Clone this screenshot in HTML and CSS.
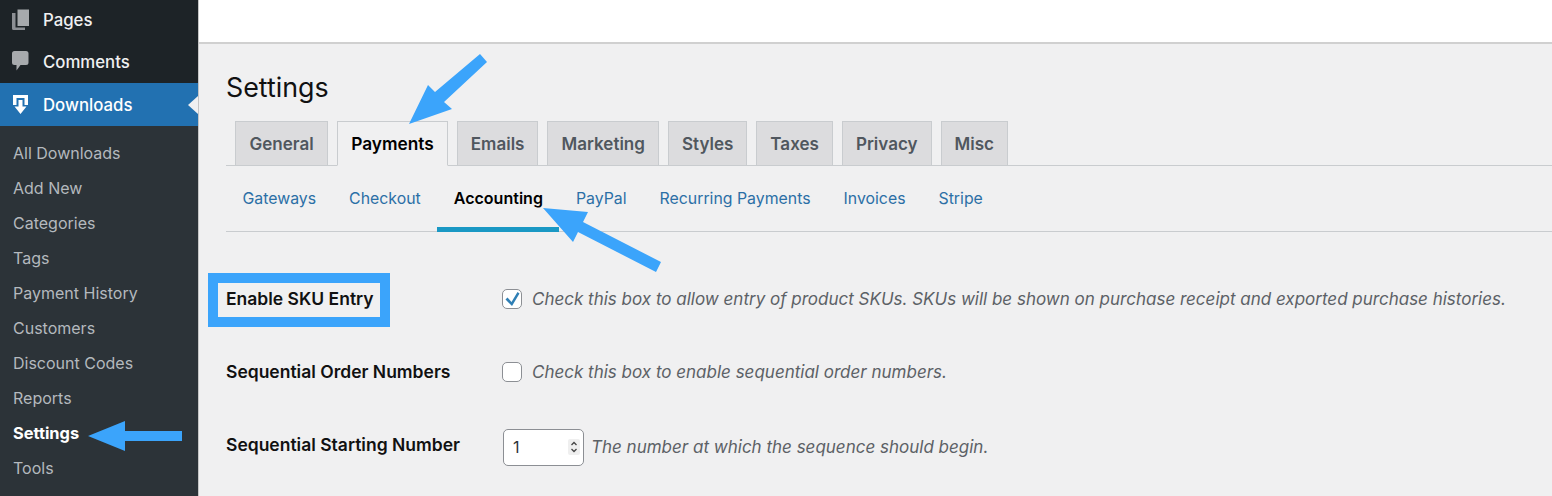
FILE: index.html
```html
<!DOCTYPE html>
<html lang="en">
<head>
<meta charset="utf-8">
<title>Settings</title>
<link rel="stylesheet" href="styles.css">
</head>
<body>
<div class="app">
  <aside class="sidebar">
    <a class="menu-item">
      <svg class="menu-icon" viewBox="0 0 18 22"><path fill="#a7aaad" d="M5.500 0.500H17v16.500H5.500z"/><path fill="#8c8f94" d="M0 4h3.500v14.500H13V21H1.500Q0 21 0 19.500z"/></svg>
      <span>Pages</span>
    </a>
    <a class="menu-item">
      <svg class="menu-icon" viewBox="0 0 18 22"><path fill="#a7aaad" d="M2.500 0h11.500Q16.500 0 16.500 2.500v9Q16.500 14 14 14H8.500L4.500 19.500V14h-2Q0 14 0 11.500v-9Q0 0 2.500 0z"/></svg>
      <span>Comments</span>
    </a>
    <a class="menu-item current">
      <svg class="menu-icon" viewBox="0 0 18 22"><path fill="#fff" d="M1 1h15v10h-3.500V4h-8v7H1z"/><path fill="#fff" d="M6.500 6h4v6.500h4L8.500 20l-6-7.500h4z"/></svg>
      <span>Downloads</span>
    </a>
    <nav class="submenu">
      <a>All Downloads</a>
      <a>Add New</a>
      <a>Categories</a>
      <a>Tags</a>
      <a>Payment History</a>
      <a>Customers</a>
      <a>Discount Codes</a>
      <a>Reports</a>
      <a class="active">Settings</a>
      <a>Tools</a>
    </nav>
  </aside>
  <main class="main">
    <div class="topbar"></div>
    <div class="content">
      <h1 class="title">Settings</h1>
      <div class="tabs">
        <a class="tab">General</a>
        <a class="tab active">Payments</a>
        <a class="tab">Emails</a>
        <a class="tab">Marketing</a>
        <a class="tab">Styles</a>
        <a class="tab">Taxes</a>
        <a class="tab">Privacy</a>
        <a class="tab">Misc</a>
      </div>
      <div class="subtabs">
        <a class="subtab">Gateways</a>
        <a class="subtab">Checkout</a>
        <a class="subtab active">Accounting</a>
        <a class="subtab">PayPal</a>
        <a class="subtab">Recurring Payments</a>
        <a class="subtab">Invoices</a>
        <a class="subtab">Stripe</a>
      </div>
      <div class="form">
        <div class="row">
          <label class="label">Enable SKU Entry</label>
          <div class="field">
            <span class="checkbox">
              <svg viewBox="0 0 18 18"><path fill="#2f7fb5" d="M2.500 9.500L4.500 7.500L8.500 12L14.500 2L16.500 3.500L9 16z"/></svg>
            </span>
            <em class="desc">Check this box to allow entry of product SKUs. SKUs will be shown on purchase receipt and exported purchase histories.</em>
          </div>
        </div>
        <div class="row">
          <label class="label">Sequential Order Numbers</label>
          <div class="field">
            <span class="checkbox"></span>
            <em class="desc">Check this box to enable sequential order numbers.</em>
          </div>
        </div>
        <div class="row">
          <label class="label">Sequential Starting Number</label>
          <div class="field number-field">
            <span class="number">1
              <svg class="spinner" viewBox="0 0 12 16"><rect width="12" height="16" rx="2" fill="#efefef"/><path fill="none" stroke="#444" stroke-width="1.300" d="M3.500 6L6 3.500 8.500 6M3.500 10L6 12.500 8.500 10"/></svg>
            </span>
            <em class="desc">The number at which the sequence should begin.</em>
          </div>
        </div>
      </div>
    </div>
  </main>
  <div class="sku-box"></div>
  <svg class="arrows" viewBox="0 0 1552 496">
    <path fill="#3ba4fb" d="M409 124L428 85L435 92L480 54L487 62L444 102L452 109z"/>
    <path fill="#3ba4fb" d="M543 208L588 212L583 222L661 262L656 272L578 232L573 242z"/>
    <path fill="#3ba4fb" d="M88 436L125 421V431H182V441H125V451z"/>
  </svg>
</div>
</body>
</html>
```
FILE: styles.css
```css
* { box-sizing: border-box; }
html, body { margin: 0; padding: 0; }
body {
  width: 1552px;
  height: 496px;
  overflow: hidden;
  font-family: Inter, "Liberation Sans", sans-serif;
  background: #f0f0f1;
}
.app { position: relative; display: flex; width: 1552px; height: 496px; overflow: hidden; }

.sidebar { width: 199px; flex: none; background: #1d2327; border-right: 1px solid #c5c5c5; }
.menu-item {
  display: flex;
  align-items: center;
  height: 43px;
  padding-left: 12px;
  gap: 13px;
  color: #f0f0f1;
  font-size: 16.800px;
  font-weight: 500;
}
.menu-item:first-child { height: 40px; }
.menu-icon { width: 18px; height: 22px; flex: none; }
.menu-item.current { position: relative; height: 43px; background: #2271b1; color: #fff; }
.menu-item.current::after {
  content: "";
  position: absolute;
  right: 0;
  top: 13px;
  border: 9px solid transparent;
  border-left-width: 0;
  border-right: 10px solid #f0f0f1;
}
.submenu { display: flex; flex-direction: column; background: #2c3338; padding-top: 10px; height: 370px; }
.submenu a {
  height: 35px;
  line-height: 35px;
  padding-left: 13px;
  font-size: 16px;
  color: #b4b9be;
}
.submenu a.active { color: #fff; font-weight: 700; font-size: 16.400px; }

.main { flex: 1; min-width: 0; }
.topbar { height: 44px; background: #fff; border-bottom: 2px solid #d0d0d0; }
.content { padding: 0 0 0 27px; }
.title { margin: 0; height: 77px; padding-top: 25px; font-size: 26.800px; line-height: 36px; font-weight: 400; color: #111; }

.tabs { display: flex; gap: 9px; height: 45px; padding-left: 9px; border-bottom: 1px solid #c9cccf; }
.tab {
  height: 45px;
  padding: 0 13px;
  line-height: 44px;
  font-size: 17.050px;
  font-weight: 600;
  color: #50575e;
  background: #dcdcde;
  border: 1px solid #c9cccf;
  border-bottom-color: #c9cccf;
}
.tab:first-child { padding: 0 13.500px; }
.tab.active { background: #f0f0f1; color: #000; font-size: 17.300px; border-bottom-color: #f0f0f1; }

.subtabs { display: flex; height: 66px; padding-left: 0; border-bottom: 1px solid #c9cccf; }
.subtab {
  padding: 0 16.500px;
  height: 66px;
  line-height: 65px;
  font-size: 15.850px;
  color: #2b6fa6;
}
.subtab.active { color: #000; font-weight: 600; font-size: 16.050px; border-bottom: 5px solid #1a98c4; }

.form { display: flex; flex-direction: column; padding-top: 30px; }
.row { display: flex; align-items: center; height: 73px; }
.label { width: 276px; flex: none; font-size: 17.500px; font-weight: 600; color: #111; }
.field { display: flex; align-items: center; gap: 10px; }
.desc { font-size: 17px; color: #5c6166; white-space: nowrap; }
.checkbox {
  display: block;
  width: 20px;
  height: 20px;
  background: #fff;
  border: 1px solid #8c8f94;
  border-radius: 5px;
}
.checkbox svg { display: block; width: 18px; height: 18px; }
.number-field { gap: 7px; padding-left: 1px; padding-top: 5px; }
.number {
  position: relative;
  display: block;
  width: 81px;
  height: 37px;
  padding-left: 9px;
  line-height: 35px;
  font-size: 16px;
  color: #2c3338;
  background: #fff;
  border: 1px solid #8c8f94;
  border-radius: 5px;
}
.spinner { position: absolute; right: 3px; top: 9px; width: 12px; height: 16px; }

.sku-box { position: absolute; left: 208px; top: 273px; width: 182px; height: 54px; border: 10px solid #3ba4fb; }
.arrows { position: absolute; left: 0; top: 0; width: 1552px; height: 496px; pointer-events: none; }
```
